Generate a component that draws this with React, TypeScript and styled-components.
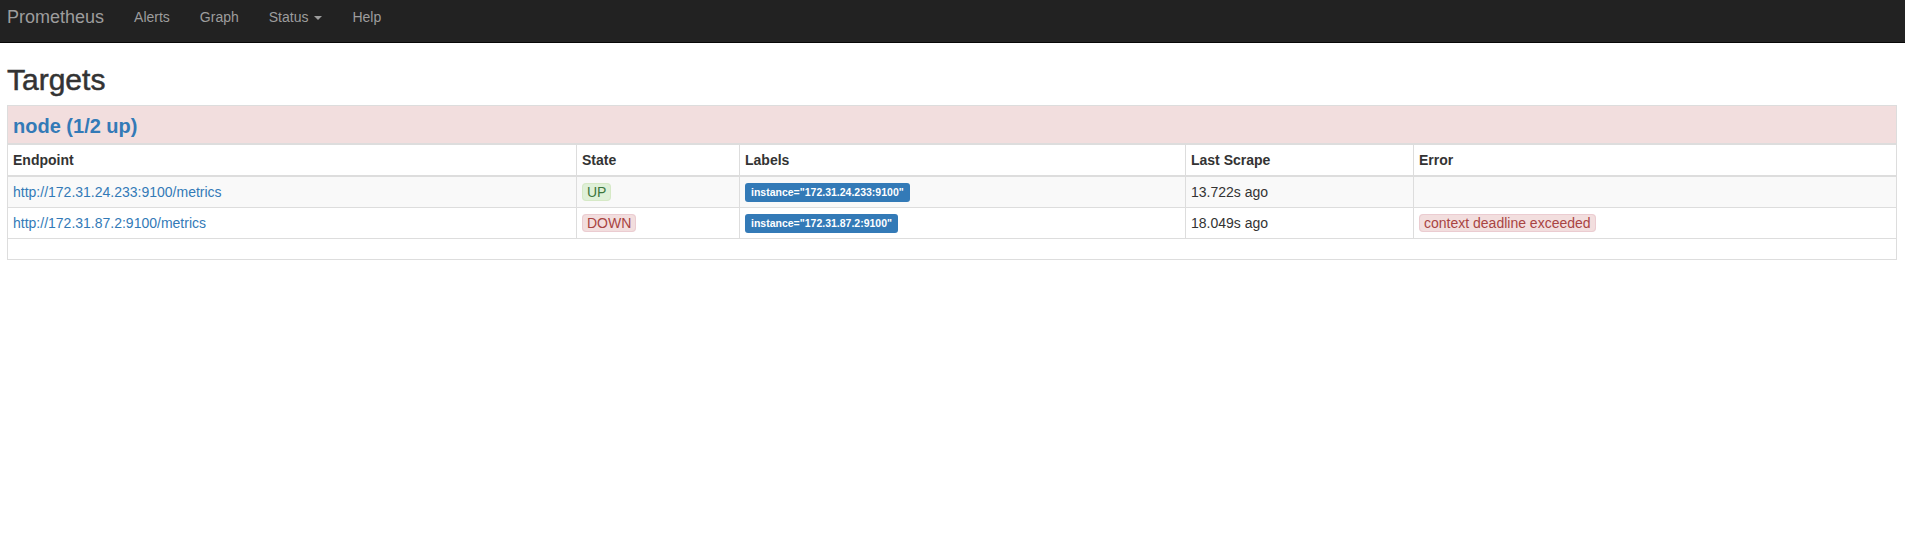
import React from 'react'
import styled, { createGlobalStyle } from 'styled-components'

const GlobalStyle = createGlobalStyle`
    * {
        box-sizing: border-box;
    }
    body {
        margin: 0;
        font-family: 'Liberation Sans', Helvetica, Arial, sans-serif;
        font-size: 14px;
        line-height: 1.42857;
        color: #333;
        background: #fff;
    }
`;

interface Target {
    endpoint: string;
    up: boolean;
    instance: string;
    lastScrape: string;
    error?: string;
}

const targets: Target[] = [
    {
        endpoint: 'http://172.31.24.233:9100/metrics',
        up: true,
        instance: '172.31.24.233:9100',
        lastScrape: '13.722s ago',
    },
    {
        endpoint: 'http://172.31.87.2:9100/metrics',
        up: false,
        instance: '172.31.87.2:9100',
        lastScrape: '18.049s ago',
        error: 'context deadline exceeded',
    },
];

const columns = [
    { title: 'Endpoint', width: 569 },
    { title: 'State', width: 163 },
    { title: 'Labels', width: 446 },
    { title: 'Last Scrape', width: 228 },
    { title: 'Error', width: 483 },
];

const App = () => {
    const healthy = targets.filter(t => t.up).length;

    return (
        <>
            <GlobalStyle />
            <Navbar>
                <Brand href="#">Prometheus</Brand>
                <NavList>
                    <li><NavLink href="#">Alerts</NavLink></li>
                    <li><NavLink href="#">Graph</NavLink></li>
                    <li><NavLink href="#">Status <Caret /></NavLink></li>
                    <li><NavLink href="#">Help</NavLink></li>
                </NavList>
            </Navbar>
            <Container>
                <Title>Targets</Title>
                <Table>
                    <colgroup>
                        {columns.map(c => <col key={c.title} style={{ width: c.width }} />)}
                    </colgroup>
                    <thead>
                        <JobHeader>
                            <td colSpan={5}>
                                <JobTitle>
                                    <Link href="#job-node">node ({healthy}/{targets.length} up)</Link>
                                </JobTitle>
                            </td>
                        </JobHeader>
                        <tr>
                            {columns.map(c => <Th key={c.title}>{c.title}</Th>)}
                        </tr>
                    </thead>
                    <tbody>
                        {targets.map((t, i) => (
                            <Row key={t.endpoint} striped={i % 2 === 0}>
                                <Td><Link href="#">{t.endpoint}</Link></Td>
                                <Td>
                                    <StateIndicator ok={t.up}>{t.up ? 'UP' : 'DOWN'}</StateIndicator>
                                </Td>
                                <Td><Label>instance="{t.instance}"</Label></Td>
                                <Td>{t.lastScrape}</Td>
                                <Td>
                                    {t.error && <StateIndicator ok={false}>{t.error}</StateIndicator>}
                                </Td>
                            </Row>
                        ))}
                        <tr>
                            <EmptyCell colSpan={5} />
                        </tr>
                    </tbody>
                </Table>
            </Container>
        </>
    )
}
export default App;

const Navbar = styled.nav`
    display: flex;
    align-items: flex-start;
    height: 43px;
    background-color: #222;
    border-bottom: 1px solid #080808;
`;

const Brand = styled.a`
    padding: 7px 15px 0 7px;
    font-size: 18px;
    line-height: 20px;
    color: #9d9d9d;
    text-decoration: none;
`;

const NavList = styled.ul`
    display: flex;
    list-style: none;
    margin: 0;
    padding: 0;
`;

const NavLink = styled.a`
    display: block;
    padding: 7px 15px 0;
    font-size: 14px;
    line-height: 20px;
    color: #9d9d9d;
    text-decoration: none;
`;

const Caret = styled.span`
    display: inline-block;
    width: 0;
    height: 0;
    margin-left: 2px;
    vertical-align: middle;
    border-top: 4px solid #9d9d9d;
    border-left: 4px solid transparent;
    border-right: 4px solid transparent;
`;

const Container = styled.div`
    padding: 0 9px 0 7px;
`;

const Title = styled.h2`
    margin: 20px 0 9px;
    font-size: 30px;
    font-weight: 500;
    line-height: 33px;
    color: #333;
    -webkit-text-stroke: 0.5px #333;
`;

const Table = styled.table`
    width: 1889px;
    table-layout: fixed;
    border-collapse: collapse;
    border: 1px solid #ddd;
`;

const JobHeader = styled.tr`
    background-color: #f2dede;

    td {
        padding: 7px 5px 3px;
        border: 1px solid #ddd;
        border-bottom-width: 2px;
    }
`;

const JobTitle = styled.h2`
    margin: 0;
    font-size: 20px;
    font-weight: bold;
    line-height: 27px;
`;

const Link = styled.a`
    color: #337ab7;
    text-decoration: none;
`;

const Th = styled.th`
    padding: 5px;
    text-align: left;
    vertical-align: bottom;
    font-weight: bold;
    line-height: 20px;
    border: 1px solid #ddd;
    border-bottom-width: 2px;
`;

interface RowProps {
    striped?: boolean;
}
const Row = styled.tr.withConfig({ shouldForwardProp: p => p !== 'striped' })<RowProps>`
    background-color: ${({ striped }) => striped ? '#f9f9f9' : '#fff'};
`;

const Td = styled.td`
    padding: 5px;
    line-height: 20px;
    vertical-align: top;
    border: 1px solid #ddd;
    white-space: nowrap;
`;

const EmptyCell = styled.td`
    height: 21px;
    padding: 0;
    border: 1px solid #ddd;
`;

interface StateProps {
    ok: boolean;
}
const StateIndicator = styled.span.withConfig({ shouldForwardProp: p => p !== 'ok' })<StateProps>`
    padding: 0 4px;
    border-radius: 4px;
    border: 1px solid ${({ ok }) => ok ? '#d6e9c6' : '#ebccd1'};
    background-color: ${({ ok }) => ok ? '#dff0d8' : '#f2dede'};
    color: ${({ ok }) => ok ? '#3c763d' : '#a94442'};
`;

const Label = styled.span`
    display: inline;
    padding: 3px 6px 4px;
    font-size: 10.5px;
    font-weight: bold;
    line-height: 1;
    color: #fff;
    text-align: center;
    white-space: nowrap;
    vertical-align: 1px;
    border-radius: 3px;
    background-color: #337ab7;
`;
